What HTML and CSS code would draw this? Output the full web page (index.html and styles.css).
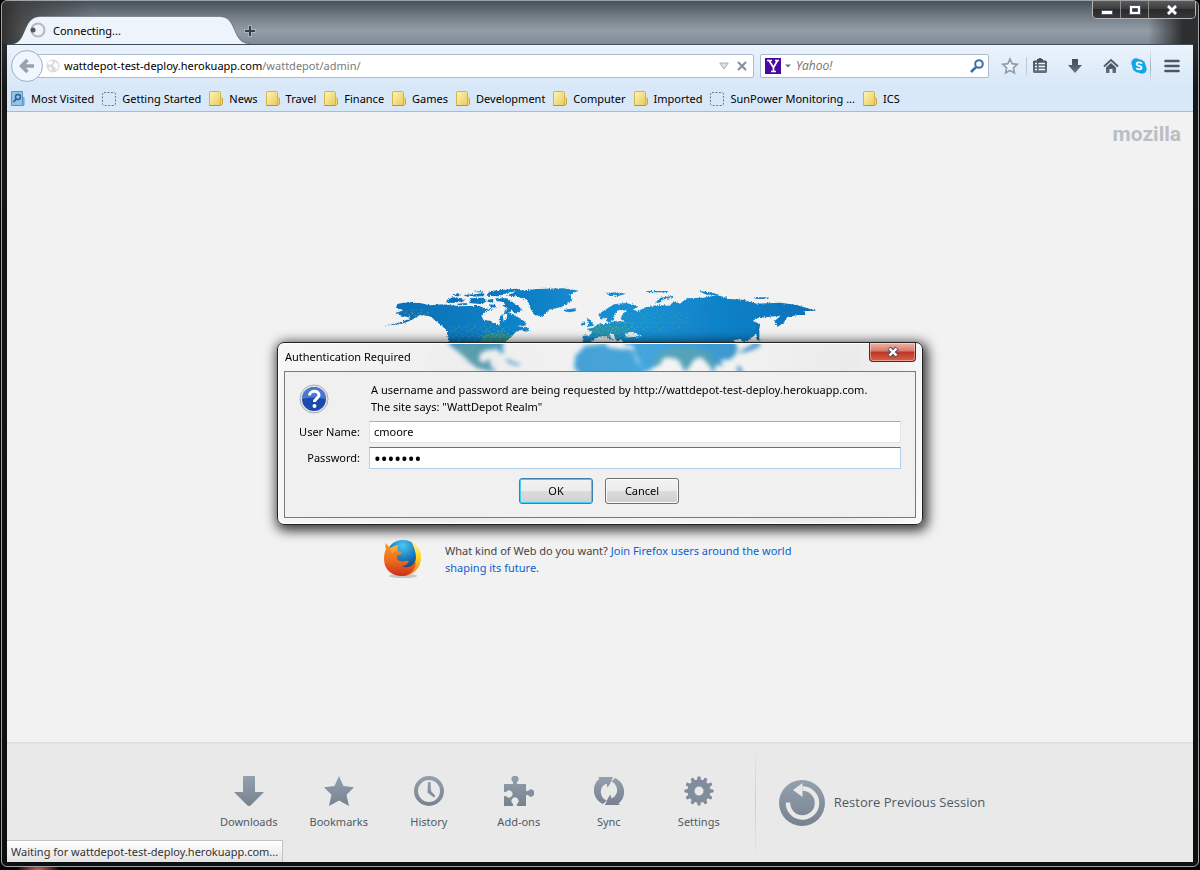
FILE: index.html
```html
<!DOCTYPE html>
<html lang="en">
<head>
<meta charset="utf-8">
<title>Connecting...</title>
<link rel="stylesheet" href="styles.css">
</head>
<body>
<svg class="defs" aria-hidden="true">
  <defs>
    <linearGradient id="slate" x1="0" y1="0" x2="0" y2="1"><stop offset="0" stop-color="#93a0ae"/><stop offset="1" stop-color="#77828f"/></linearGradient>
    <linearGradient id="tool" x1="0" y1="0" x2="0" y2="1"><stop offset="0" stop-color="#414b58"/><stop offset="1" stop-color="#68727f"/></linearGradient>
    <linearGradient id="gold" x1="0" y1="0" x2="1" y2="1"><stop offset="0" stop-color="#fdf6b4"/><stop offset="1" stop-color="#e9c95c"/></linearGradient>
    <symbol id="folder" viewBox="0 0 14 16"><path d="M11 6.500h1.500l1 1V13l-1.500 1.500h-2z" fill="#efd777" stroke="#c9a638"/><path d="M1 .5h9.500a1 1 0 0 1 1 1V14.500H.5V1z" fill="url(#gold)" stroke="#d3b64a"/><path d="M.5 14.500h11" stroke="#b8962c"/></symbol>
    <symbol id="blank" viewBox="0 0 14 14"><rect x=".5" y=".5" width="13" height="13" rx="1.500" fill="none" stroke="#6b7580" stroke-dasharray="2 1.500"/></symbol>
  </defs>
</svg>
<div class="window">
  <header class="titlebar">
    <div class="tab">
      <svg class="tab-shape" viewBox="0 0 238 28" aria-hidden="true"><path d="M0 28C15 28 10 1 28 .5H208C226 1 219 28 238 28z" fill="#edf4fc"/><path d="M0 27.500C15 27 10 1 28 .5H208C226 1 219 27 238 27.500" fill="none" stroke="#4f5b66" stroke-opacity=".5"/></svg>
      <svg class="spinner" viewBox="0 0 16 16" aria-hidden="true"><circle cx="8" cy="8" r="6.500" fill="none" stroke="#b5b8bc" stroke-width="2"/><circle cx="3" cy="8" r="2.500" fill="#555"/></svg>
      <span>Connecting...</span>
    </div>
    <button class="plain new-tab" aria-label="New tab"><svg width="12" height="12" viewBox="0 0 12 12"><path d="M6 0v12M0 6h12" stroke="#a9b3bd" stroke-width="4"/><path d="M6 1v10M1 6h10" stroke="#36414b" stroke-width="2"/></svg></button>
    <div class="controls">
      <button aria-label="Minimize"><svg width="14" height="14" viewBox="0 0 14 14"><rect x="1.500" y="7.500" width="11" height="4" fill="#fff" stroke="#555a68"/></svg></button>
      <button aria-label="Maximize"><svg width="14" height="14" viewBox="0 0 14 14"><path d="M1.500 2.500h11v9h-11z" fill="#fff" stroke="#555a68"/><path d="M4.500 5.500h5v3h-5z" fill="#333" stroke="#555a68"/></svg></button>
      <button class="wide" aria-label="Close"><svg width="14" height="14" viewBox="0 0 14 14"><path d="M3 3l8 8M11 3l-8 8" stroke="#555a68" stroke-width="4.500"/><path d="M3 3l8 8M11 3l-8 8" stroke="#fff" stroke-width="2.500"/></svg></button>
    </div>
  </header>

  <nav class="chrome">
    <div class="toolbar">
      <button class="back" aria-label="Back"><svg width="16" height="16" viewBox="0 0 16 16"><path d="M8.500 2L2.500 8l6 6M3 8h12" fill="none" stroke="#98a2af" stroke-width="3.600"/></svg></button>
      <div class="field url">
        <svg width="14" height="14" viewBox="0 0 14 14" aria-hidden="true"><circle cx="7" cy="7" r="6.500" fill="#dcdcdc"/><path d="M2 3l3-1 2 1-1 2-2 1-2-1zM9 3l3 2v4l-2 2-1-3-2-1zM3 8l3 1-1 3-2-2z" fill="#fff"/></svg>
        <label class="address" aria-label="Address"><b>wattdepot-test-deploy.herokuapp.com</b>/wattdepot/admin/</label>
        <svg width="10" height="8" viewBox="0 0 10 8" aria-hidden="true"><path d="M.8 1h8.400L5 7z" fill="#dce1e6" stroke="#a7b0b9"/></svg>
        <button class="plain" aria-label="Stop"><svg width="10" height="10" viewBox="0 0 10 10"><path d="M1 1l8 8M9 1L1 9" stroke="#8492a0" stroke-width="2.200"/></svg></button>
      </div>
      <div class="field search">
        <svg width="16" height="16" viewBox="0 0 16 16" aria-hidden="true"><rect width="16" height="16" fill="#4a0a9e"/><path d="M2 2.500h5M10 2.500h4M4 2.500l4.500 7M12.500 2.500l-4 7M8.500 8v6M6 13.500h5" fill="none" stroke="#fff" stroke-width="1.700"/></svg>
        <svg width="6" height="4" viewBox="0 0 6 4" aria-hidden="true"><path d="M0 .5h6L3 3.500z" fill="#67707a"/></svg>
        <input type="text" placeholder="Yahoo!" aria-label="Search with Yahoo!">
        <button class="plain" aria-label="Search"><svg width="14" height="14" viewBox="0 0 14 14"><circle cx="9" cy="5" r="3.800" fill="none" stroke="#3c6fa8" stroke-width="2"/><path d="M6.200 7.800L1 13" stroke="#3c6fa8" stroke-width="2.600"/></svg></button>
      </div>
      <div class="tools">
        <button class="plain" aria-label="Bookmark"><svg width="18" height="18" viewBox="0 0 18 18"><path d="M9 2l2.100 4.700 5.100.6-3.800 3.500 1 5.100L9 13.400l-4.400 2.500 1-5.100-3.800-3.500 5.100-.6z" fill="#eef5fb" stroke="#929daa" stroke-width="1.700"/></svg></button>
        <i class="split short"></i>
        <button class="plain clip" aria-label="Bookmarks"><svg width="16" height="16" viewBox="0 0 16 16"><path d="M1 3.500l1.500-1H5V1h1.500l.5-1h2l.5 1H11v1.500h2.500l1.500 1V14l-1 1H2l-1-1z" fill="url(#tool)"/><path d="M3 5.500h2M6.500 5.500H13M3 8.500h2M6.500 8.500H13M3 11.500h2M6.500 11.500H13" stroke="#eef5fc" stroke-width="1.400"/></svg></button>
        <button class="plain down" aria-label="Downloads"><svg width="16" height="16" viewBox="0 0 16 16"><path d="M5 1h6v6h4L8 15 1 7h4z" fill="url(#tool)"/></svg></button>
        <button class="plain home" aria-label="Home"><svg width="16" height="16" viewBox="0 0 16 16"><path d="M1 8.500L8 2l7 6.500" fill="none" stroke="#525d69" stroke-width="2"/><path d="M3 9.500L8 5l5 4.500V15H9.500v-4h-3v4H3z" fill="url(#tool)"/></svg></button>
        <button class="plain skype" aria-label="Skype"><svg width="16" height="16" viewBox="0 0 16 16"><circle cx="5" cy="5" r="4.700" fill="#12a5ea"/><circle cx="11" cy="11" r="4.700" fill="#12a5ea"/><circle cx="8" cy="8" r="6.800" fill="#12a5ea"/><path d="M11 5.600C9.500 3.600 5.500 4 5.600 6.200c.1 2.200 5 1.300 5 3.600 0 2-4 2.100-5.300.2" fill="none" stroke="#fff" stroke-width="1.800"/></svg></button>
        <i class="split"></i>
        <button class="plain menu" aria-label="Menu"><svg width="16" height="14" viewBox="0 0 16 14"><path d="M1.500 2h13M1.500 7h13M1.500 12h13" stroke="#4c5763" stroke-width="2.600" stroke-linecap="round"/></svg></button>
      </div>
    </div>
    <div class="bookmarks">
      <a href="#"><svg width="14" height="16" viewBox="0 0 14 16"><path d="M11 6.500h2V14l-2 1z" fill="#8cc3e6" stroke="#5a9cc8"/><path d="M.5 .5h11v14H.5z" fill="#8fc4e6" stroke="#5597c4"/><circle cx="7" cy="6" r="2.500" fill="none" stroke="#2d5f8f" stroke-width="1.400"/><path d="M5.200 8L2.500 11" stroke="#2d5f8f" stroke-width="1.800"/></svg>Most Visited</a>
      <a href="#"><svg width="14" height="14"><use href="#blank"/></svg>Getting Started</a>
      <a href="#"><svg width="14" height="16"><use href="#folder"/></svg>News</a>
      <a href="#"><svg width="14" height="16"><use href="#folder"/></svg>Travel</a>
      <a href="#"><svg width="14" height="16"><use href="#folder"/></svg>Finance</a>
      <a href="#"><svg width="14" height="16"><use href="#folder"/></svg>Games</a>
      <a href="#"><svg width="14" height="16"><use href="#folder"/></svg>Development</a>
      <a href="#"><svg width="14" height="16"><use href="#folder"/></svg>Computer</a>
      <a href="#"><svg width="14" height="16"><use href="#folder"/></svg>Imported</a>
      <a href="#"><svg width="14" height="14"><use href="#blank"/></svg>SunPower Monitoring ...</a>
      <a href="#"><svg width="14" height="16"><use href="#folder"/></svg>ICS</a>
    </div>
  </nav>

  <main class="page">
    <div class="brand">mozilla</div>
    <div class="middle">
      <svg class="map" viewBox="40 50 1300 270" role="img" aria-label="World map">
        <defs>
          <linearGradient id="sea" x1="0" x2="1" y1="0" y2="0"><stop offset="0" stop-color="#0a6cb4"/><stop offset=".35" stop-color="#1286cc"/><stop offset=".6" stop-color="#1590d4"/><stop offset="1" stop-color="#0b70b8"/></linearGradient>
          <filter id="coast" x="-2%" y="-5%" width="104%" height="110%"><feTurbulence type="fractalNoise" baseFrequency=".22" numOctaves="3" seed="4" result="n"/><feDisplacementMap in="SourceGraphic" in2="n" scale="9" xChannelSelector="R" yChannelSelector="G"/></filter>
          <pattern id="towns" width="47" height="41" patternUnits="userSpaceOnUse"><path d="M3 5h3v3h-3zM12 2h3v3h-3zM22 9h3v3h-3zM31 4h4v3h-4zM41 12h3v3h-3zM7 17h4v3h-4zM17 20h3v3h-3zM28 18h3v3h-3zM37 24h4v3h-4zM4 30h3v3h-3zM13 34h4v3h-4zM23 30h3v3h-3zM33 36h3v3h-3zM43 33h3v3h-3zM19 13h3v3h-3z" fill="#6cc04e"/></pattern>
          <clipPath id="land">
            <path d="M82 101L100 97 150 98 180 105 218 102 270 108 325 106 350 115 375 116 392 104 405 118 425 114 420 126 398 134 401 154 410 145 412 128 430 132 452 145 470 158 464 166 440 168 470 171 482 181 466 184 452 178 438 184 420 204 405 215 396 232 403 248 390 246 380 236 350 238 330 250 326 272 346 278 352 268 362 272 360 288 380 302 360 302 320 292 296 272 262 242 236 222 230 180 208 160 180 138 150 134 124 150 96 160 40 167 98 154 122 142 94 136 78 128 100 120 78 112z"/>
            <path d="M638 196L662 195 666 184 650 176 668 172 692 158 698 164 712 158 740 152 764 154 752 146 760 128 772 122 748 118 734 130 732 148 720 156 708 152 712 142 692 146 685 132 706 118 732 102 768 98 792 104 804 110 788 118 806 122 822 112 862 104 900 106 910 92 930 100 950 84 1000 82 1044 74 1080 86 1120 88 1160 100 1232 97 1280 104 1340 122 1304 122 1306 134 1284 134 1252 140 1240 158 1222 170 1214 152 1232 136 1190 140 1160 144 1148 152 1170 160 1166 186 1140 206 1122 216 1112 206 1090 210 1104 232 1096 254 1080 268 1052 268 1060 290 1038 282 1030 310 1018 284 994 260 972 268 944 306 926 268 900 260 882 262 872 280 834 302 820 304 806 272 794 250 790 228 762 222 756 206 740 214 730 190 716 192 730 212 706 198 680 200 662 216 638 216z"/>
            <path d="M645 226L704 220 720 232 752 236 786 236 800 270 824 310 800 320H640L612 292 616 258z"/>
          </clipPath>
        </defs>
        <g filter="url(#coast)" fill="url(#sea)">
          <rect x="40" y="50" width="1300" height="270" clip-path="url(#land)"/>
          <path d="M334 136L350 122 378 114 392 100 408 100 402 130 390 138 388 166 362 152 340 148z" fill="#f2f2f2"/>
          <path d="M765 188L790 184 816 196 790 200 768 202z" fill="#f2f2f2"/>
          <path d="M410 76L440 62 500 56 580 54 626 61 600 72 606 92 574 110 538 118 516 138 494 134 482 116 472 88 438 78zM360 62L440 55 455 60 410 68 385 78 350 76zM232 88L250 80 272 84 285 92 245 98 228 96zM280 74L345 69 340 78 292 79zM300 84L340 82 350 92 336 102 298 98zM376 84L410 84 440 104 456 116 440 130 420 116 400 108 405 96 380 92zM355 102L375 104 380 112 362 110zM582 118L615 114 618 122 598 126 584 123zM650 142L662 150 672 166 650 170 656 158zM636 154L646 154 645 164 634 166zM706 68L740 66 768 70 742 78 722 77zM828 62L896 62 890 66 832 66zM856 96L872 82 912 76 904 82 876 88 868 98zM984 62L1020 66 1050 74 1010 73zM1152 80L1198 82 1190 86 1156 85zM1158 160L1168 160 1168 214 1160 208zM1142 224L1168 216 1172 226 1148 238 1110 250 1106 246zM406 266L450 282 444 288 412 274zM1104 284L1116 296 1114 310 1104 306z"/>
          <path d="M262 100L290 98 292 104 264 105zM320 90L350 88 346 95zM250 72L262 70 276 76 258 78zM310 64L340 62 338 67zM352 88L370 86 368 98 354 96z"/>
        </g>
        <g clip-path="url(#land)"><ellipse cx="325" cy="188" rx="110" ry="30" fill="url(#towns)" opacity=".6"/><ellipse cx="385" cy="200" rx="62" ry="26" fill="url(#towns)"/><ellipse cx="380" cy="205" rx="46" ry="18" fill="#6aab48" opacity=".35"/><ellipse cx="145" cy="128" rx="45" ry="12" fill="url(#towns)"/><ellipse cx="725" cy="178" rx="82" ry="30" fill="url(#towns)"/><ellipse cx="715" cy="180" rx="55" ry="16" fill="#58a860" opacity=".25"/><ellipse cx="850" cy="150" rx="110" ry="35" fill="url(#towns)" opacity=".5"/><ellipse cx="945" cy="275" rx="90" ry="45" fill="#4a9070" opacity=".4"/><ellipse cx="310" cy="260" rx="80" ry="40" fill="#4a9070" opacity=".5"/></g>
      </svg>
      <div class="snippet">
        <svg width="40" height="40" viewBox="0 0 40 40" aria-hidden="true">
          <defs><radialGradient id="globe" cx=".5" cy=".15" r=".8"><stop offset="0" stop-color="#4cc9f2"/><stop offset=".5" stop-color="#1979ba"/><stop offset="1" stop-color="#10285f"/></radialGradient><linearGradient id="fox" x1="0" y1="0" x2="0" y2="1"><stop offset="0" stop-color="#f59a28"/><stop offset=".55" stop-color="#ee6a1c"/><stop offset="1" stop-color="#c9301a"/></linearGradient><linearGradient id="tail" x1="0" y1="0" x2="0" y2="1"><stop offset="0" stop-color="#fff3a0"/><stop offset=".5" stop-color="#ffd21e"/><stop offset="1" stop-color="#ee6a1c"/></linearGradient></defs>
          <ellipse cx="20" cy="37" rx="14" ry="2" fill="#999" opacity=".5"/>
          <circle cx="20" cy="18.500" r="17.500" fill="url(#globe)"/>
          <path d="M28 2c7 4 11 11 10 18-1 10-9 17-18 17l2-6c6-1 10-6 11-12 0-6-2-11-5-17z" fill="url(#tail)"/>
          <path d="M3 4c1 2 3 4 5 5 3-2 5-3 8-3-2 2-2 4-1 6l4 1c0 2-3 3-5 4 0 3 1 5 4 5 3 1 4-1 8 0-1 3-4 5-7 5 5 3 11 0 14-5 0 8-6 15-14 15C8 37 1 30 1 20c0-5 1-8 2-10-1-2-1-4 0-6z" fill="url(#fox)"/>
          <path d="M7 9c3-2 6-3 9-3-2 2-2 4-1 6-3 0-5 1-6 3z" fill="#f9b24a" opacity=".7"/>
        </svg>
        <p>What kind of Web do you want? <a href="#">Join Firefox users around the world shaping its future</a>.</p>
      </div>
    </div>

    <footer class="launcher">
      <div class="buttons">
        <button><svg viewBox="0 0 30 30"><path d="M9 1q0-1 1-1h10q1 0 1 1v15h9L17 29q-2 2-4 0L0 16h9z"/></svg>Downloads</button>
        <button><svg viewBox="0 0 30 30"><path d="M15 0l4.500 10L30 11.300 22.500 18.700 25 30l-10-5.500L5 30l2.500-11.300L0 11.300 10.500 10z"/></svg>Bookmarks</button>
        <button><svg viewBox="0 0 30 30"><path fill-rule="evenodd" d="M15 0a15 15 0 1 1 0 30a15 15 0 0 1 0-30zM15 4a11 11 0 1 0 0 22a11 11 0 0 0 0-22zM14 6h2.500l.5 9 4.500 5-1.500 1.500-6.500-5z"/></svg>History</button>
        <button><svg viewBox="0 0 30 30"><path d="M0 8h8.500q1.500-1 0-2.500a3.500 3.500 0 1 1 5 0Q12 7 13.500 8H22v6q1 2 2.500.5a3.500 3.500 0 1 1 0 5Q23 18 22 20v10h-8.500q-1.500-1 0-2.500a3.500 3.500 0 1 0-5 0Q10 29 8.500 30H0v-9.500q1-1.500 2.500 0a3.500 3.500 0 1 0 0-5q-1.500 1.500-2.500 0z"/></svg>Add-ons</button>
        <button><svg viewBox="0 0 30 30"><path d="M4 1h15L16 8l-2.500 3.500-1-4C6 10 5 18 10 23l2.500 1.500L9 28C-2 23-3 9 5.500 2.500zM26 29H11l3-7 2.500-3.500 1 4c6.500-2.500 7.500-10.500 2.500-15.500L17.500 5.500 21 2c11 5 12 19 3.500 25.500z"/></svg>Sync</button>
        <button><svg viewBox="0 0 30 30"><circle cx="15" cy="15" r="8" fill="none" stroke="#818d9b" stroke-width="7"/><g stroke="#818d9b" stroke-width="3.600" stroke-linecap="round"><path d="M15 2v4M15 24v4M2 15h4M24 15h4M8.500 3.700l2 3.500M19.500 22.800l2 3.500M3.700 8.500l3.500 2M22.800 19.500l3.500 2M3.700 21.500l3.500-2M22.800 10.500l3.500-2M8.500 26.300l2-3.500M19.500 7.200l2-3.500"/></g></svg>Settings</button>
      </div>
      <i class="rule"></i>
      <button class="restore"><svg viewBox="0 0 46 46"><circle cx="23" cy="23" r="23"/><path d="M9 22.500a14.500 14.500 0 1 0 14.500-14" fill="none" stroke="#e9e9e9" stroke-width="4.500"/><path d="M14 10l9.500-7v14z" fill="#e9e9e9"/></svg>Restore Previous Session</button>
    </footer>
    <div class="status">Waiting for wattdepot-test-deploy.herokuapp.com...</div>
  </main>
</div>

<div class="overlay">
  <form class="dialog" role="dialog" aria-labelledby="dialog-title">
    <div class="dialog-head">
      <span id="dialog-title">Authentication Required</span>
      <button type="button" class="close" aria-label="Close"><svg width="14" height="12" viewBox="0 0 14 12"><path d="M3 2l8 8M11 2l-8 8" stroke="#53506a" stroke-width="4.500"/><path d="M3.500 2.500l7 7M10.500 2.500l-7 7" stroke="#fff" stroke-width="2.400"/></svg></button>
    </div>
    <div class="dialog-body">
      <svg class="question" width="30" height="30" viewBox="0 0 30 30" aria-hidden="true"><circle cx="15" cy="15" r="14" fill="#e4e6ea" stroke="#a9acb2"/><circle cx="15" cy="15" r="12" fill="#1c49ab"/><path d="M3 15a12 12 0 0 1 24 0q-12-3-24 0z" fill="#4a78cf"/><path d="M10.500 11.500c0-5.500 9.500-5.500 9.500-.5 0 3.500-4.500 3.500-4.500 7" fill="none" stroke="#fff" stroke-width="3"/><circle cx="15.500" cy="22" r="2" fill="#fff"/></svg>
      <p>A username and password are being requested by http://wattdepot-test-deploy.herokuapp.com.<br>The site says: "WattDepot Realm"</p>
      <label for="user">User Name:</label>
      <input id="user" type="text" value="cmoore">
      <label for="pass">Password:</label>
      <input id="pass" class="active" type="password" value="secret1">
      <div class="actions"><button type="submit" class="default">OK</button><button type="button">Cancel</button></div>
    </div>
  </form>
</div>
</body>
</html>
```

FILE: styles.css
```css
* { box-sizing: border-box; }
body {
  margin: 0;
  background: radial-gradient(ellipse 22px 10px at 38px 100%, #d8605a, transparent) #050505;
  color: #000;
  font: 11px/17px "Noto Sans", "Open Sans", sans-serif;
}
button, input { font: inherit; color: inherit; }
button { padding: 0; }
svg { flex: none; display: block; }
a { color: inherit; text-decoration: none; }
.defs { position: absolute; width: 0; height: 0; }
.plain { border: 0; background: none; display: flex; }

.window {
  display: flex;
  flex-direction: column;
  height: calc(100vh - 3px);
  margin: 0 1px 3px;
  padding: 0 5px 4px;
  border: 1px solid #a0a3a6;
  border-radius: 6px;
  background: linear-gradient(#3c3c3c, #141618 90px, #0d0f10);
}
.titlebar {
  display: flex;
  align-items: center;
  height: 43px;
  margin: 0 -5px;
  padding-left: 10px;
  border-radius: 6px 6px 0 0;
  background:
    linear-gradient(90deg, #303030, rgba(60, 60, 60, .8) 20px, transparent 90px, transparent calc(100% - 50px), #2d2e2f calc(100% - 15px)),
    linear-gradient(#48525a, #78838c 18px, #929da8 30px, #808b95);
}
.tab {
  position: relative;
  display: flex;
  align-items: center;
  align-self: flex-end;
  gap: 7px;
  width: 238px;
  height: 28px;
  padding-left: 18px;
}
.tab-shape { position: absolute; inset: 0; width: 238px; height: 28px; }
.spinner, .tab span { position: relative; }
.spinner { width: 16px; height: 16px; }
.new-tab { margin: 16px 0 0 -6px; }
.controls {
  display: flex;
  align-self: flex-start;
  margin: 0 2px 0 auto;
  border: 1px solid #b5b7b9;
  border-top: 0;
  border-radius: 0 0 5px 5px;
  overflow: hidden;
}
.controls button {
  display: flex;
  align-items: center;
  justify-content: center;
  width: 28px;
  height: 17px;
  border: 0;
  border-right: 1px solid #8c8e90;
  background: linear-gradient(#5a5a5a, #3a3a3a 50%, #2a2a2a 50%, #383838);
}
.controls .wide { width: 46px; border: 0; }

.chrome {
  border-top: 1px solid #3f4f5e;
  border-bottom: 1px solid #a9bccf;
  background: linear-gradient(#ebf3fc, #d9e8f8 40px);
}
.toolbar { display: flex; align-items: center; height: 41px; padding: 0 13px 0 4px; }
.back {
  z-index: 1;
  display: flex;
  align-items: center;
  justify-content: center;
  width: 32px;
  height: 32px;
  border: 1px solid #9bb0c5;
  border-radius: 50%;
  background: #f0f6fd;
}
.field {
  display: flex;
  align-items: center;
  height: 24px;
  border: 1px solid #a9bccd;
  border-radius: 2px;
  background: #fff;
}
.url { flex: 1; gap: 4px; margin-left: -6px; padding: 0 6px 0 8px; }
.address { flex: 1; color: #7a7a7a; }
.address b { color: #000; font-weight: 400; }
.url .plain { margin-left: 4px; }
.search { gap: 4px; width: 229px; margin-left: 6px; padding: 0 4px; }
.search input { flex: 1; min-width: 0; padding: 0 0 0 1px; border: 0; outline: 0; }
.search input::placeholder { color: #737373; font: italic 12px "Open Sans", sans-serif; opacity: 1; }
.tools { display: flex; align-items: center; margin-left: 12px; }
.split { width: 1px; height: 36px; margin-left: 3px; background: linear-gradient(transparent, #9fb0c2, transparent); }
.split.short { height: 18px; margin-left: 7px; background: #b9c9da; }
.clip { margin-left: 5px; }
.down { margin-left: 19px; }
.home { margin-left: 20px; }
.skype { margin-left: 12px; }
.menu { margin-left: 13px; }
.bookmarks { display: flex; align-items: center; gap: 8px; height: 25px; padding-left: 4px; white-space: nowrap; overflow: hidden; }
.bookmarks a { display: flex; align-items: center; gap: 6px; }

.page { position: relative; flex: 1; display: flex; flex-direction: column; background: #f2f2f2; }
.brand {
  align-self: flex-end;
  padding: 10px 12px 0 0;
  color: #b9bfc5;
  font: 700 21px/24px Roboto, sans-serif;
}
.middle { flex: 1; display: flex; flex-direction: column; align-items: center; padding-top: 141px; }
.map { width: 434px; height: 90px; }
.snippet { display: flex; gap: 22px; width: 434px; margin-top: 162px; color: #444; }
.snippet p { margin: 3px 0 0; }
.snippet a { color: #0a5fd0; }
.launcher {
  display: flex;
  justify-content: center;
  height: 120px;
  border-top: 1px solid #dcdcdc;
  background: #e9e9e9;
  color: #4d5967;
  box-shadow: inset 0 1px #e2e2e2;
}
.buttons { display: flex; margin-right: 11px; }
.launcher button { display: flex; align-items: center; border: 0; background: none; }
.launcher svg { fill: url(#slate); }
.buttons button { flex-direction: column; gap: 7px; width: 90px; padding-top: 33px; }
.buttons svg { width: 30px; height: 30px; }
.rule { width: 1px; background: linear-gradient(transparent, #cdcdcd 50%, transparent); }
.launcher .restore { gap: 9px; margin: 0 11px 0 23px; font: 13px/17px "Open Sans", sans-serif; }
.restore svg { width: 46px; height: 46px; }
.status {
  position: absolute;
  left: 0;
  bottom: 0;
  padding: 2px 4px;
  border: 1px solid #c2c2c2;
  border-width: 1px 1px 0 0;
  background: linear-gradient(#fff, #e4e4e4);
  color: #333;
}

.overlay { position: absolute; inset: 0; z-index: 2; display: flex; justify-content: center; align-items: flex-start; padding-top: 342px; }
.dialog {
  width: 646px;
  padding: 0 6px 6px;
  border: 1px solid #222;
  border-radius: 7px;
  background: linear-gradient(100deg, rgba(255, 255, 255, .4), rgba(225, 225, 225, .25) 30%, rgba(255, 255, 255, .2) 60%, rgba(215, 215, 215, .25) 85%, rgba(255, 255, 255, .6));
  backdrop-filter: blur(2px);
  box-shadow: inset 0 0 0 1px #fff, 2px 3px 12px 3px rgba(0, 0, 0, .75);
}
.dialog-head { display: flex; justify-content: space-between; align-items: center; height: 28px; padding: 0 0 2px 1px; }
.close {
  display: flex;
  align-items: center;
  justify-content: center;
  align-self: flex-start;
  width: 47px;
  height: 19px;
  border: 1px solid #5c2320;
  border-top: 0;
  border-radius: 0 0 4px 4px;
  background: linear-gradient(#efb5a8, #d87868 45%, #bc3524 50%, #d9604a);
  box-shadow: inset 0 0 0 1px rgba(255, 255, 255, .4);
}
.dialog-body {
  display: grid;
  grid-template-columns: 61px 1fr;
  column-gap: 9px;
  row-gap: 4px;
  align-items: center;
  padding: 9px 14px 13px;
  border: 1px solid #77797b;
  background: #f0f0f0;
}
.dialog-body p { margin: 0; padding: 0 0 2px 2px; white-space: nowrap; }
.dialog-body label { text-align: right; white-space: nowrap; justify-self: end; padding-bottom: 1px; }
.dialog-body input {
  width: 100%;
  height: 22px;
  padding: 0 4px 1px;
  border: 1px solid #e2e3ea;
  border-top-color: #abadb3;
  border-radius: 1px;
  outline: 0;
  background: #fff;
}
.dialog-body .active { border-color: #b5cfe7; border-top-color: #3d7bad; font-size: 18px; }
.actions { grid-column: 1 / -1; display: flex; justify-content: center; gap: 12px; padding: 5px 2px 0 0; }
.actions button {
  width: 74px;
  height: 26px;
  padding-bottom: 1px;
  border: 1px solid #707070;
  border-radius: 3px;
  background: linear-gradient(#f3f3f3, #ebebeb 50%, #dcdcdc 50%, #cfcfcf);
  box-shadow: inset 0 0 0 1px #fafafa;
}
.actions .default { border-color: #3c7fb1; box-shadow: inset 0 0 0 1px #43cff5; }
```
